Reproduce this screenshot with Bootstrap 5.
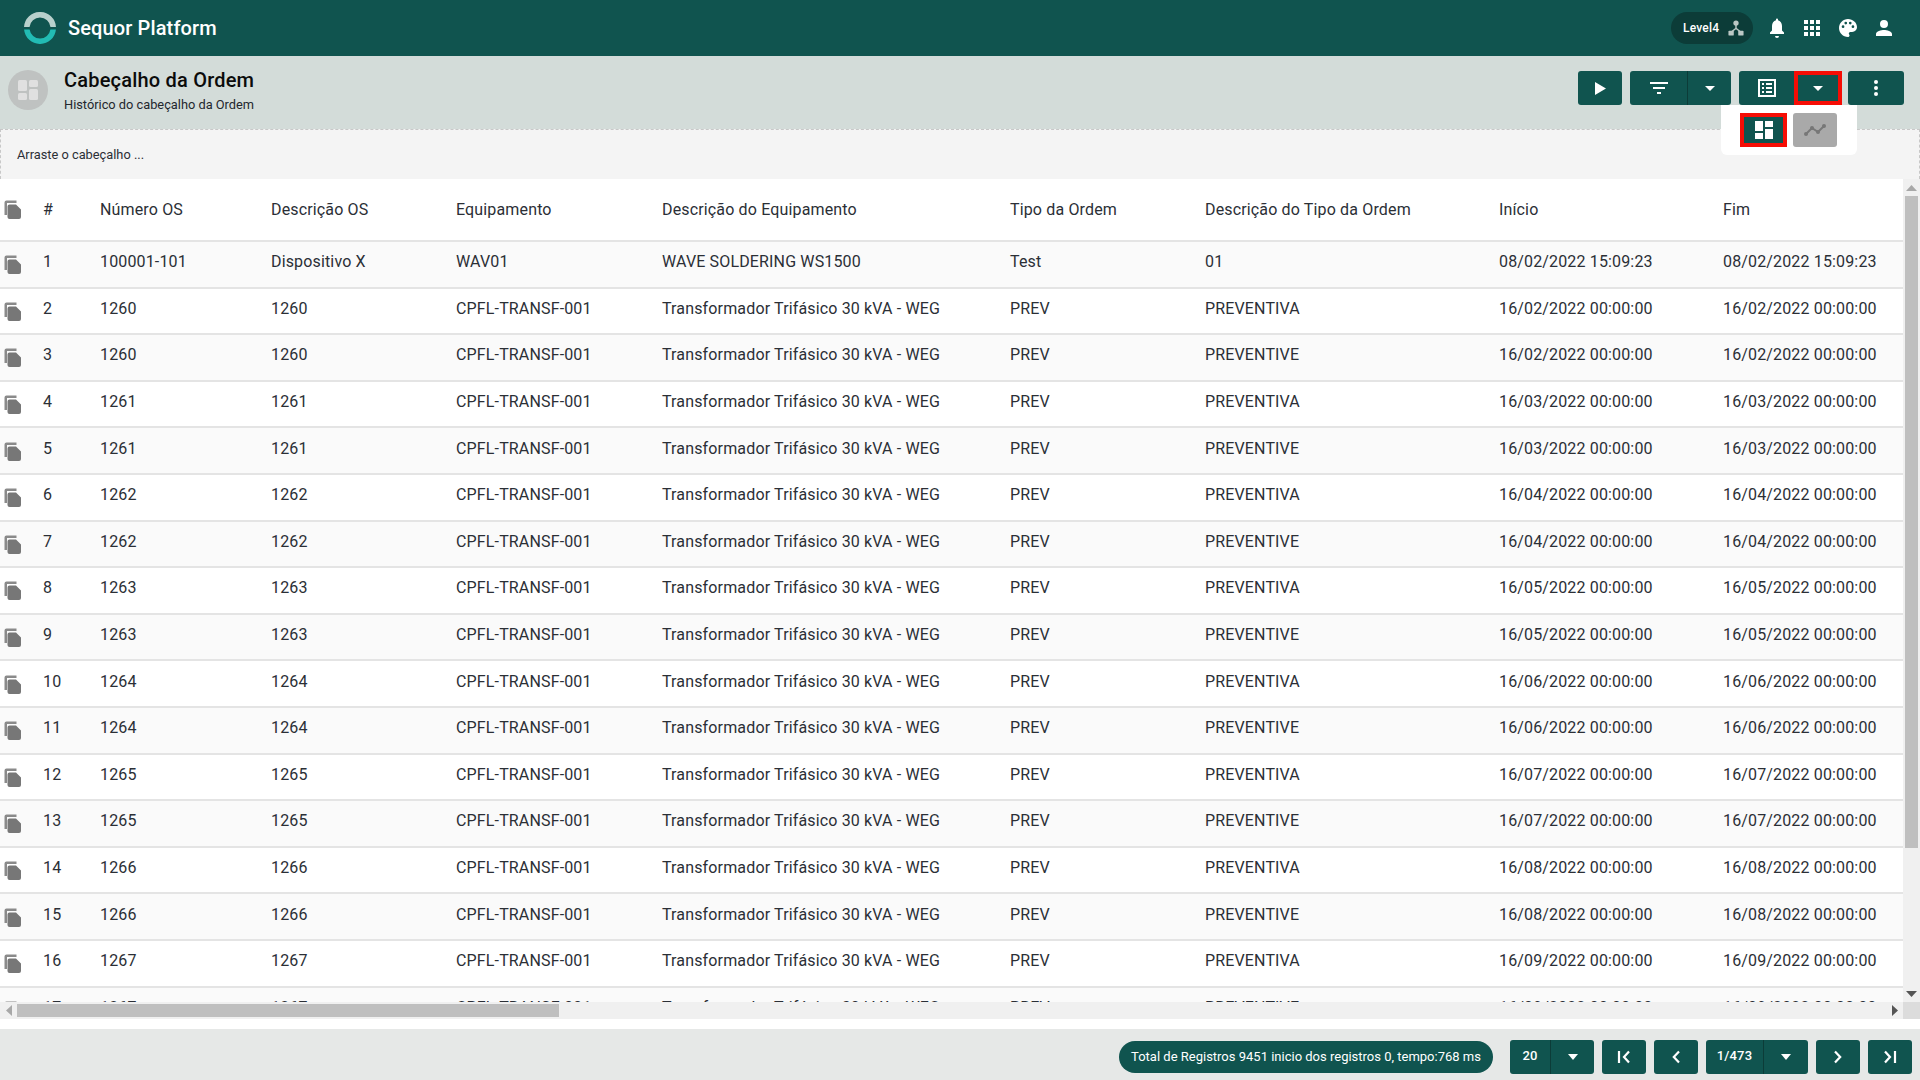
<!DOCTYPE html>
<html lang="pt">
<head>
<meta charset="utf-8">
<title>Sequor Platform</title>
<link rel="stylesheet" href="https://cdn.jsdelivr.net/npm/bootstrap@5.3.0/dist/css/bootstrap.min.css">
<style>
:root{--sq:#10544f;}
html,body{height:100%;}
body{font-family:Roboto,"Liberation Sans",sans-serif;font-size:16px;color:#2b2f36;overflow:hidden;background:#fff;}
.sq-page{height:100vh;}
.sq-top{height:56px;background:var(--sq);color:#fff;padding:0 28px 0 24px;flex:none;}
.sq-brand{font-size:20px;font-weight:500;margin-left:12px;letter-spacing:.13px;}
.sq-level{height:32px;width:82px;background:#0c3c38;border-radius:16px;font-size:12px;font-weight:500;letter-spacing:.2px;padding-left:12px;gap:9px;margin-right:16px;}
.sq-topicons{gap:19px;}
.sq-sub{height:73px;background:#d3dcd9;flex:none;padding:0 16px 5px 8px;}
.sq-avatar{width:40px;height:40px;border-radius:50%;background:#bfc2c1;margin-right:16px;}
.sq-title{font-size:20px;font-weight:500;color:#0b0b0b;line-height:24px;letter-spacing:.2px;}
.sq-subtitle{font-size:12.8px;line-height:16px;margin-top:5px;color:#23272e;}
.sq-btn{height:34px;background:var(--sq);border:0;border-radius:3px;color:#fff;padding:0;display:flex;align-items:center;justify-content:center;}
.sq-tools{gap:8px;margin-top:-4px;}
.sq-w44{width:44px;}
.sq-w47{width:47px;}
.sq-w48{width:48px;}
.sq-w55{width:55px;}
.sq-w56{width:56px;}
.sq-w57{width:57px;}
.sq-more{margin-left:-2px;}
.sq-menu{position:absolute;top:105px;left:1721px;width:136px;height:50px;background:#fff;border-radius:0 0 6px 6px;z-index:5;gap:6px;padding-left:19px;}
.sq-red{border:4px solid #f60d05;}
.sq-off{background:#a9a9a9;}
.sq-drag{height:50px;background:#f4f4f4;border:1px dashed #c8c8c8;border-bottom:0;font-size:12.8px;padding-left:16px;flex:none;}
.sq-body{min-height:0;flex:1 1 auto;}
.sq-mid{min-height:0;}
.sq-view{overflow:hidden;}
.sq-grid{table-layout:fixed;width:1918px;border-collapse:collapse;}
.sq-grid col:nth-child(1){width:43px;}
.sq-grid col:nth-child(2){width:57px;}
.sq-grid col:nth-child(3){width:171px;}
.sq-grid col:nth-child(4){width:185px;}
.sq-grid col:nth-child(5){width:206px;}
.sq-grid col:nth-child(6){width:348px;}
.sq-grid col:nth-child(7){width:195px;}
.sq-grid col:nth-child(8){width:294px;}
.sq-grid col:nth-child(9){width:224px;}
.sq-grid col:nth-child(10){width:195px;}
.sq-grid th,.sq-grid td{font-weight:400;padding:0;white-space:nowrap;border-bottom:2px solid #e4e4e4;font-size:16px;letter-spacing:.15px;}
.sq-grid th{height:62px;}
.sq-grid td{height:46.6px;padding-bottom:4px;}
.sq-grid tbody tr:nth-child(odd){background:#fafafa;}
.sq-copy{display:block;margin-left:4px;margin-top:5px;width:17px;height:19px;}
.sq-grid th .sq-copy{margin-top:0;}
.sq-vbar{width:17px;background:#f0f0f0;flex:none;}
.sq-hbar{height:17px;background:#f0f0f0;flex:none;}
.sq-arrow{height:17px;}
.sq-vthumb{width:13px;height:652px;background:#bfbfbf;margin:0 auto;}
.sq-hthumb{width:542px;height:13px;background:#bfbfbf;}
.sq-end{width:17px;height:17px;}
.sq-corner{width:17px;height:17px;background:#dcdcdc;}
.sq-gap{height:10px;flex:none;background:#fff;}
.sq-foot{height:51px;background:#e6e8e7;flex:none;padding:5px 8px 0 0;}
.sq-pill{height:32px;width:374px;background:var(--sq);color:#fff;border-radius:16px;font-size:13px;margin-right:17px;}
.sq-pg{height:34px;background:var(--sq);border-radius:3px;color:#fff;font-size:13px;font-weight:500;letter-spacing:.2px;}
.sq-pg1{width:84px;}
.sq-pg2{width:44px;}
.sq-pg3{width:102px;}
.sq-pgl1{width:40px;padding-bottom:2px;}
.sq-pgl3{width:57px;padding-bottom:2px;}
.sq-pgs{gap:8px;}
.sq-split{border-left:1px solid #0c3c38;}
.sq-defs{width:0;height:0;overflow:hidden;}
</style>
</head>
<body>
<svg class="sq-defs position-absolute" aria-hidden="true"><symbol id="sq-copyicon" viewBox="0 0 17 19"><path d="M.5 2.500A2 2 0 0 1 2.500.5H12.500V3H3v12H.5z" fill="#8a8a8a"/><path d="M5.500 4.500H12l5 5v7.500a2 2 0 0 1-2 2H5.500a2 2 0 0 1-2-2V6.500a2 2 0 0 1 2-2z" fill="#777"/></symbol></svg>
<div class="sq-page d-flex flex-column position-relative">
  <header class="sq-top d-flex align-items-center">
    <svg width="32" height="32" viewBox="0 0 32 32"><path d="M.03 15A16 16 0 0 1 31.970 15H26.450A10.500 10.500 0 0 0 5.550 15Z" fill="#b9d0cc"/><path d="M.07 17.500A16 16 0 0 0 31.930 17.500H26.390A10.500 10.500 0 0 1 5.610 17.500Z" fill="#22bcb4"/></svg>
    <span class="sq-brand">Sequor Platform</span>
    <div class="ms-auto d-flex align-items-center">
      <div class="sq-level d-flex align-items-center">Level4
        <svg width="16" height="16" viewBox="0 0 18 18" fill="#bcc8c5"><circle cx="9" cy="3.500" r="3"/><rect x="0.5" y="12" width="6" height="5.5" rx="1"/><rect x="11.500" y="12" width="6" height="5.5" rx="1"/><path d="M8.200 5h1.600v4l4.300 3.400-1 1.200L9 10.500l-4.100 3.100-1-1.200L8.200 9z"/></svg>
      </div>
      <div class="d-flex align-items-center sq-topicons">
        <svg width="16" height="20" viewBox="4.500 2 15 20" fill="#fff"><path d="M12 22a2 2 0 0 0 2-2h-4a2 2 0 0 0 2 2zm7-4v-1.500l-2-2V10c0-3-1.600-5-4-5.700V3.500a1 1 0 0 0-2 0v.8C8.600 5 7 7 7 10v4.500l-2 2V18z"/></svg>
        <svg width="16" height="16" viewBox="1 1 16 16" fill="#fff"><path d="M1 1h4v4H1zM7 1h4v4H7zM13 1h4v4h-4zM1 7h4v4H1zM7 7h4v4H7zM13 7h4v4h-4zM1 13h4v4H1zM7 13h4v4H7zM13 13h4v4h-4z"/></svg>
        <svg width="18" height="18" viewBox="2 2 20 20" fill="#fff"><path d="M12 2C6.500 2 2 6.500 2 12s4.500 10 10 10c.9 0 1.700-.7 1.700-1.700 0-.4-.2-.8-.4-1.100-.3-.3-.4-.7-.4-1.100 0-.9.7-1.700 1.700-1.700h2C19.600 16.400 22 14 22 11c0-4.900-4.500-9-10-9zM6.500 12a1.500 1.500 0 1 1 0-3 1.500 1.500 0 0 1 0 3zm3-4a1.500 1.500 0 1 1 0-3 1.500 1.500 0 0 1 0 3zm5 0a1.500 1.500 0 1 1 0-3 1.500 1.500 0 0 1 0 3zm3 4a1.500 1.500 0 1 1 0-3 1.500 1.500 0 0 1 0 3z"/></svg>
        <svg width="16" height="16" viewBox="4 4 16 16" fill="#fff"><path d="M12 12a4 4 0 1 0 0-8 4 4 0 0 0 0 8zm0 2c-2.700 0-8 1.300-8 4v2h16v-2c0-2.700-5.300-4-8-4z"/></svg>
      </div>
    </div>
  </header>

  <section class="sq-sub d-flex align-items-center">
    <div class="sq-avatar d-flex align-items-center justify-content-center">
      <svg width="20" height="20" viewBox="0 0 20 20" fill="#e0e0e0"><rect width="9" height="11" rx="1.500"/><rect y="13" width="9" height="7" rx="1.500"/><rect x="11" width="9" height="7" rx="1.500"/><rect x="11" y="9" width="9" height="11" rx="1.500"/></svg>
    </div>
    <div>
      <div class="sq-title">Cabeçalho da Ordem</div>
      <div class="sq-subtitle">Histórico do cabeçalho da Ordem</div>
    </div>
    <div class="ms-auto d-flex sq-tools">
      <button class="sq-btn sq-w44" aria-label="Executar"><svg width="11" height="13" viewBox="0 0 12 14" fill="#fff"><path d="M0 0l12 7-12 7z"/></svg></button>
      <div class="d-flex">
        <button class="sq-btn sq-w57 rounded-end-0" aria-label="Filtro"><svg width="18" height="12" viewBox="0 0 18 12" fill="#fff"><path d="M0 0h18v2H0zM3 5h12v2H3zM7 10h4v2H7z"/></svg></button>
        <button class="sq-btn sq-w44 rounded-start-0 sq-split" aria-label="Abrir"><svg width="10" height="5" viewBox="0 0 10 5" fill="#fff"><path d="M0 0h10L5 5z"/></svg></button>
      </div>
      <div class="d-flex">
        <button class="sq-btn sq-w55 rounded-end-0" aria-label="Lista"><svg width="18" height="18" viewBox="0 0 18 18" fill="#fff"><path fill-rule="evenodd" d="M0 0h18v18H0zM2 2v14h14V2zM4 4h2v2H4zM8 4h6v2H8zM4 8h2v2H4zM8 8h6v2H8zM4 12h2v2H4zM8 12h6v2H8z"/></svg></button>
        <button class="sq-btn sq-w48 rounded-0 sq-red" aria-label="Abrir"><svg width="10" height="5" viewBox="0 0 10 5" fill="#fff"><path d="M0 0h10L5 5z"/></svg></button>
      </div>
      <button class="sq-btn sq-w56 sq-more" aria-label="Mais"><svg width="4" height="16" viewBox="0 0 4 16" fill="#fff"><circle cx="2" cy="2" r="2"/><circle cx="2" cy="8" r="2"/><circle cx="2" cy="14" r="2"/></svg></button>
    </div>
  </section>

  <div class="sq-menu d-flex align-items-center">
    <button class="sq-btn sq-w47 rounded-0 sq-red" aria-label="Painel"><svg width="18" height="18" viewBox="0 0 18 18" fill="#fff"><path d="M0 0h8v10H0zM0 12h8v6H0zM10 0h8v6h-8zM10 8h8v10h-8z"/></svg></button>
    <button class="sq-btn sq-w44 sq-off" aria-label="Gráfico"><svg width="22" height="12" viewBox="0 0 22 12" fill="none" stroke="#777" stroke-width="2"><path d="M2 10l6-6 6 4 6-6"/><g fill="#777" stroke="none"><circle cx="2" cy="10" r="2"/><circle cx="8" cy="4" r="2"/><circle cx="14" cy="8" r="2"/><circle cx="20" cy="2" r="2"/></g></svg></button>
  </div>

  <div class="sq-drag d-flex align-items-center">Arraste o cabeçalho ...</div>

  <div class="sq-body d-flex flex-column">
    <div class="sq-mid d-flex flex-grow-1">
      <div class="sq-view flex-grow-1">
        <table class="sq-grid">
          <colgroup><col><col><col><col><col><col><col><col><col><col></colgroup>
          <thead><tr>
            <th><svg class="sq-copy"><use href="#sq-copyicon"/></svg></th>
            <th>#</th><th>Número OS</th><th>Descrição OS</th><th>Equipamento</th><th>Descrição do Equipamento</th><th>Tipo da Ordem</th><th>Descrição do Tipo da Ordem</th><th>Início</th><th>Fim</th>
          </tr></thead>
          <tbody>
<tr><td><svg class="sq-copy"><use href="#sq-copyicon"/></svg></td><td>1</td><td>100001-101</td><td>Dispositivo X</td><td>WAV01</td><td>WAVE SOLDERING WS1500</td><td>Test</td><td>01</td><td>08/02/2022 15:09:23</td><td>08/02/2022 15:09:23</td></tr>
<tr><td><svg class="sq-copy"><use href="#sq-copyicon"/></svg></td><td>2</td><td>1260</td><td>1260</td><td>CPFL-TRANSF-001</td><td>Transformador Trifásico 30 kVA - WEG</td><td>PREV</td><td>PREVENTIVA</td><td>16/02/2022 00:00:00</td><td>16/02/2022 00:00:00</td></tr>
<tr><td><svg class="sq-copy"><use href="#sq-copyicon"/></svg></td><td>3</td><td>1260</td><td>1260</td><td>CPFL-TRANSF-001</td><td>Transformador Trifásico 30 kVA - WEG</td><td>PREV</td><td>PREVENTIVE</td><td>16/02/2022 00:00:00</td><td>16/02/2022 00:00:00</td></tr>
<tr><td><svg class="sq-copy"><use href="#sq-copyicon"/></svg></td><td>4</td><td>1261</td><td>1261</td><td>CPFL-TRANSF-001</td><td>Transformador Trifásico 30 kVA - WEG</td><td>PREV</td><td>PREVENTIVA</td><td>16/03/2022 00:00:00</td><td>16/03/2022 00:00:00</td></tr>
<tr><td><svg class="sq-copy"><use href="#sq-copyicon"/></svg></td><td>5</td><td>1261</td><td>1261</td><td>CPFL-TRANSF-001</td><td>Transformador Trifásico 30 kVA - WEG</td><td>PREV</td><td>PREVENTIVE</td><td>16/03/2022 00:00:00</td><td>16/03/2022 00:00:00</td></tr>
<tr><td><svg class="sq-copy"><use href="#sq-copyicon"/></svg></td><td>6</td><td>1262</td><td>1262</td><td>CPFL-TRANSF-001</td><td>Transformador Trifásico 30 kVA - WEG</td><td>PREV</td><td>PREVENTIVA</td><td>16/04/2022 00:00:00</td><td>16/04/2022 00:00:00</td></tr>
<tr><td><svg class="sq-copy"><use href="#sq-copyicon"/></svg></td><td>7</td><td>1262</td><td>1262</td><td>CPFL-TRANSF-001</td><td>Transformador Trifásico 30 kVA - WEG</td><td>PREV</td><td>PREVENTIVE</td><td>16/04/2022 00:00:00</td><td>16/04/2022 00:00:00</td></tr>
<tr><td><svg class="sq-copy"><use href="#sq-copyicon"/></svg></td><td>8</td><td>1263</td><td>1263</td><td>CPFL-TRANSF-001</td><td>Transformador Trifásico 30 kVA - WEG</td><td>PREV</td><td>PREVENTIVA</td><td>16/05/2022 00:00:00</td><td>16/05/2022 00:00:00</td></tr>
<tr><td><svg class="sq-copy"><use href="#sq-copyicon"/></svg></td><td>9</td><td>1263</td><td>1263</td><td>CPFL-TRANSF-001</td><td>Transformador Trifásico 30 kVA - WEG</td><td>PREV</td><td>PREVENTIVE</td><td>16/05/2022 00:00:00</td><td>16/05/2022 00:00:00</td></tr>
<tr><td><svg class="sq-copy"><use href="#sq-copyicon"/></svg></td><td>10</td><td>1264</td><td>1264</td><td>CPFL-TRANSF-001</td><td>Transformador Trifásico 30 kVA - WEG</td><td>PREV</td><td>PREVENTIVA</td><td>16/06/2022 00:00:00</td><td>16/06/2022 00:00:00</td></tr>
<tr><td><svg class="sq-copy"><use href="#sq-copyicon"/></svg></td><td>11</td><td>1264</td><td>1264</td><td>CPFL-TRANSF-001</td><td>Transformador Trifásico 30 kVA - WEG</td><td>PREV</td><td>PREVENTIVE</td><td>16/06/2022 00:00:00</td><td>16/06/2022 00:00:00</td></tr>
<tr><td><svg class="sq-copy"><use href="#sq-copyicon"/></svg></td><td>12</td><td>1265</td><td>1265</td><td>CPFL-TRANSF-001</td><td>Transformador Trifásico 30 kVA - WEG</td><td>PREV</td><td>PREVENTIVA</td><td>16/07/2022 00:00:00</td><td>16/07/2022 00:00:00</td></tr>
<tr><td><svg class="sq-copy"><use href="#sq-copyicon"/></svg></td><td>13</td><td>1265</td><td>1265</td><td>CPFL-TRANSF-001</td><td>Transformador Trifásico 30 kVA - WEG</td><td>PREV</td><td>PREVENTIVE</td><td>16/07/2022 00:00:00</td><td>16/07/2022 00:00:00</td></tr>
<tr><td><svg class="sq-copy"><use href="#sq-copyicon"/></svg></td><td>14</td><td>1266</td><td>1266</td><td>CPFL-TRANSF-001</td><td>Transformador Trifásico 30 kVA - WEG</td><td>PREV</td><td>PREVENTIVA</td><td>16/08/2022 00:00:00</td><td>16/08/2022 00:00:00</td></tr>
<tr><td><svg class="sq-copy"><use href="#sq-copyicon"/></svg></td><td>15</td><td>1266</td><td>1266</td><td>CPFL-TRANSF-001</td><td>Transformador Trifásico 30 kVA - WEG</td><td>PREV</td><td>PREVENTIVE</td><td>16/08/2022 00:00:00</td><td>16/08/2022 00:00:00</td></tr>
<tr><td><svg class="sq-copy"><use href="#sq-copyicon"/></svg></td><td>16</td><td>1267</td><td>1267</td><td>CPFL-TRANSF-001</td><td>Transformador Trifásico 30 kVA - WEG</td><td>PREV</td><td>PREVENTIVA</td><td>16/09/2022 00:00:00</td><td>16/09/2022 00:00:00</td></tr>
<tr><td><svg class="sq-copy"><use href="#sq-copyicon"/></svg></td><td>17</td><td>1267</td><td>1267</td><td>CPFL-TRANSF-001</td><td>Transformador Trifásico 30 kVA - WEG</td><td>PREV</td><td>PREVENTIVE</td><td>16/09/2022 00:00:00</td><td>16/09/2022 00:00:00</td></tr>
          </tbody>
        </table>
      </div>
      <div class="sq-vbar d-flex flex-column">
        <div class="sq-arrow d-flex justify-content-center align-items-center"><svg width="11" height="6" viewBox="0 0 11 6" fill="#a8a8a8"><path d="M5.500 0L11 6H0z"/></svg></div>
        <div class="sq-vthumb"></div>
        <div class="sq-arrow mt-auto d-flex justify-content-center align-items-center"><svg width="11" height="6" viewBox="0 0 11 6" fill="#555"><path d="M0 0h11L5.500 6z"/></svg></div>
      </div>
    </div>
    <div class="sq-hbar d-flex align-items-center">
      <div class="sq-end d-flex justify-content-center align-items-center"><svg width="6" height="11" viewBox="0 0 6 11" fill="#a8a8a8"><path d="M6 0v11L0 5.500z"/></svg></div>
      <div class="sq-hthumb"></div>
      <div class="sq-end ms-auto d-flex justify-content-center align-items-center"><svg width="6" height="11" viewBox="0 0 6 11" fill="#555"><path d="M0 0v11l6-5.500z"/></svg></div>
      <div class="sq-corner"></div>
    </div>
  </div>

  <div class="sq-gap"></div>

  <footer class="sq-foot d-flex align-items-center justify-content-end">
    <div class="sq-pill d-flex align-items-center justify-content-center">Total de Registros 9451 inicio dos registros 0, tempo:768 ms</div>
    <div class="d-flex sq-pgs">
      <div class="sq-pg sq-pg1 d-flex"><span class="sq-pgl1 d-flex align-items-center justify-content-center">20</span><span class="sq-split flex-grow-1 d-flex align-items-center justify-content-center"><svg width="10" height="6" viewBox="0 0 10 6" fill="#fff"><path d="M0 0h10L5 6z"/></svg></span></div>
      <div class="sq-pg sq-pg2 d-flex align-items-center justify-content-center"><svg width="14" height="14" viewBox="0 0 14 14" fill="none" stroke="#fff" stroke-width="2.200"><path d="M2 1v12M12 1.500L7 7l5 5.500"/></svg></div>
      <div class="sq-pg sq-pg2 d-flex align-items-center justify-content-center"><svg width="8" height="14" viewBox="0 0 8 14" fill="none" stroke="#fff" stroke-width="2.200"><path d="M7 1.500L1.800 7 7 12.500"/></svg></div>
      <div class="sq-pg sq-pg3 d-flex"><span class="sq-pgl3 d-flex align-items-center justify-content-center">1/473</span><span class="sq-split flex-grow-1 d-flex align-items-center justify-content-center"><svg width="10" height="6" viewBox="0 0 10 6" fill="#fff"><path d="M0 0h10L5 6z"/></svg></span></div>
      <div class="sq-pg sq-pg2 d-flex align-items-center justify-content-center"><svg width="8" height="14" viewBox="0 0 8 14" fill="none" stroke="#fff" stroke-width="2.200"><path d="M1 1.500L6.200 7 1 12.500"/></svg></div>
      <div class="sq-pg sq-pg2 d-flex align-items-center justify-content-center"><svg width="14" height="14" viewBox="0 0 14 14" fill="none" stroke="#fff" stroke-width="2.200"><path d="M12 1v12M2 1.500L7 7l-5 5.500"/></svg></div>
    </div>
  </footer>
</div>
<script src="https://cdn.jsdelivr.net/npm/bootstrap@5.3.0/dist/js/bootstrap.bundle.min.js"></script>
</body>
</html>
